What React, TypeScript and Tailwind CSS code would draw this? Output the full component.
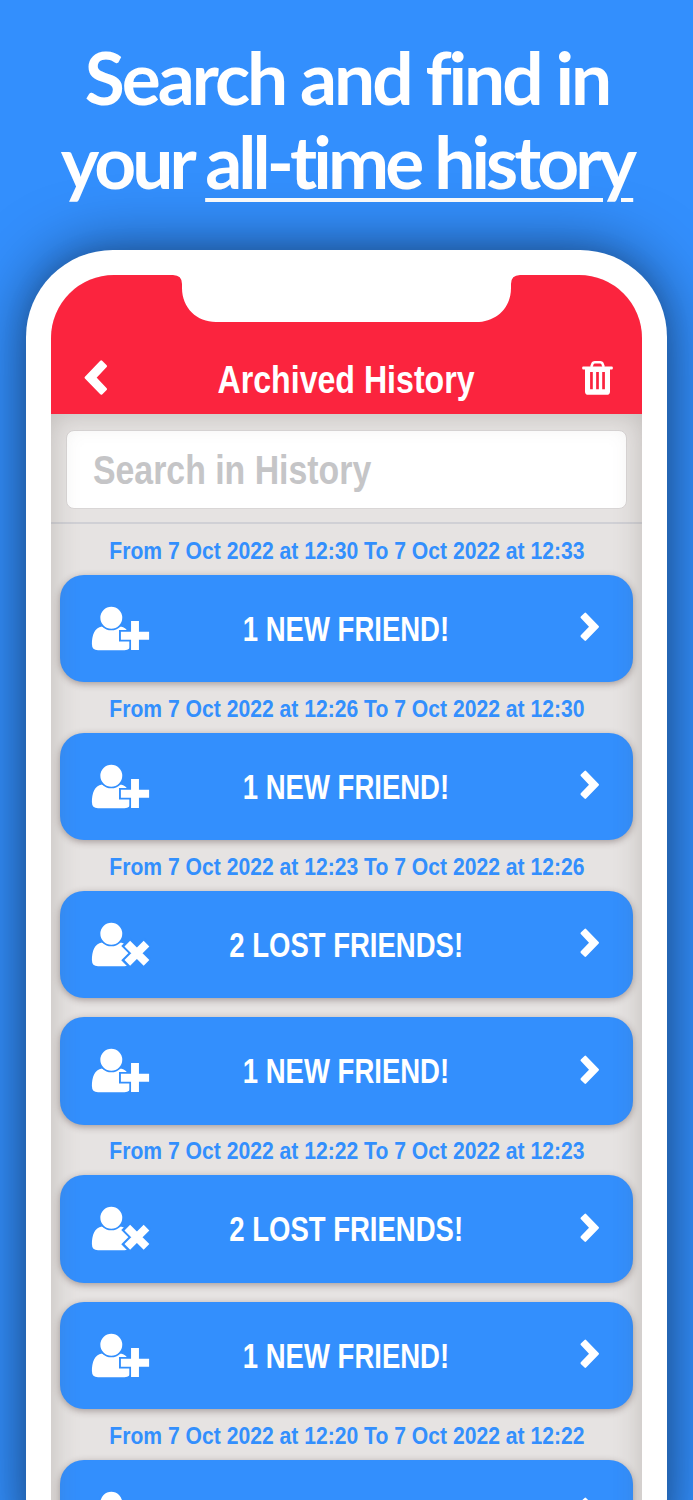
type Kind = "new" | "lost";

interface Item {
  kind: Kind;
  text?: string;
}

interface Group {
  label: string;
  items: Item[];
}

const newFriend: Item = { kind: "new", text: "1 NEW FRIEND!" };
const lostFriends: Item = { kind: "lost", text: "2 LOST FRIENDS!" };

const groups: Group[] = [
  { label: "From 7 Oct 2022 at 12:30 To 7 Oct 2022 at 12:33", items: [newFriend] },
  { label: "From 7 Oct 2022 at 12:26 To 7 Oct 2022 at 12:30", items: [newFriend] },
  { label: "From 7 Oct 2022 at 12:23 To 7 Oct 2022 at 12:26", items: [lostFriends, newFriend] },
  { label: "From 7 Oct 2022 at 12:22 To 7 Oct 2022 at 12:23", items: [lostFriends, newFriend] },
  { label: "From 7 Oct 2022 at 12:20 To 7 Oct 2022 at 12:22", items: [{ kind: "new" }] },
];

function Chevron({ className }: { className: string }) {
  return (
    <svg viewBox="0 0 20 30" className={className} aria-hidden="true">
      <path
        d="M5.3 1.7 L1.6 5.3 L10.5 14.7 L1.6 24.1 L5.3 27.8 L17.9 14.7 Z"
        fill="white"
        stroke="white"
        strokeWidth="2.2"
        strokeLinejoin="round"
      />
    </svg>
  );
}

function TrashIcon() {
  return (
    <svg viewBox="0 0 31 35" className="mb-[3px] h-[35px] w-[31px]" aria-hidden="true">
      <path d="M9.3 7 L10.6 3.4 Q11.2 2.2 12.7 2.2 H18.3 Q19.8 2.2 20.4 3.4 L21.7 7" fill="none" stroke="white" strokeWidth="2.6" />
      <rect x="0.2" y="6.4" width="30.6" height="3" rx="1" fill="white" />
      <path
        fillRule="evenodd"
        fill="white"
        d="M3 7 H28 V31.4 Q28 34.8 24.7 34.8 H6.3 Q3 34.8 3 31.4 Z M8.1 12 V29.2 H10.8 V12 Z M14.15 12 V29.2 H16.85 V12 Z M20.2 12 V29.2 H22.9 V12 Z"
      />
    </svg>
  );
}

function UserIcon({ kind }: { kind: Kind }) {
  return (
    <svg viewBox="0 0 60 46" className="h-[46px] w-[60px] shrink-0" aria-hidden="true">
      <path
        d="M11 20.6 Q15 23.6 20.3 23.6 Q25.6 23.6 29.6 20.6 C37 21.4 39.6 30 39.6 38 Q39.6 44.2 33.6 44.2 H7 Q0.9 44.2 0.9 38 C0.9 30 3.4 21.4 11 20.6 Z"
        fill="white"
      />
      <circle cx="20.3" cy="11.7" r="11.8" fill="white" stroke="#338ffd" strokeWidth="1.7" />
      {kind === "new" ? (
        <g>
          <path d="M44 13 V46 M28 29.8 H60" stroke="#338ffd" strokeWidth="11.4" />
          <path d="M44 14.9 V44.1 M29.9 29.8 H58.1" stroke="white" strokeWidth="7.9" />
        </g>
      ) : (
        <g>
          <path d="M34.5 19.8 L57.3 42.6 M57.3 19.8 L34.5 42.6" stroke="#338ffd" strokeWidth="12" />
          <path d="M36.3 21.6 L55.5 40.8 M55.5 21.6 L36.3 40.8" stroke="white" strokeWidth="8" />
        </g>
      )}
    </svg>
  );
}

function HistoryRow({ kind, text }: Item) {
  return (
    <button className="relative flex h-[107.3px] w-full items-center justify-between rounded-[24px] bg-[#338ffd] pr-[33.5px] pl-[31px] shadow-[0_2px_7px_rgba(60,40,40,0.38)]">
      <UserIcon kind={kind} />
      {text && (
        <span className="-ml-[39px] w-[340px] text-center text-[34.4px] leading-[40px] font-bold whitespace-nowrap text-white">
          <span className="inline-block scale-x-[0.8]">{text}</span>
        </span>
      )}
      <Chevron className="mb-[3px] h-[30px] w-[20px] shrink-0" />
    </button>
  );
}

export default function App() {
  return (
    <main className="flex h-[1500px] w-[693px] flex-col overflow-hidden bg-[#338ffd] font-['Liberation_Sans',Arial,sans-serif]">
      <h1 className="flex h-[249.5px] shrink-0 flex-col items-center pt-[35px] pl-px font-['Lato',sans-serif] text-[73px] leading-[84px] font-bold whitespace-nowrap text-white">
        <span className="tracking-[-3px]">Search and find in</span>
        <span className="tracking-[-3.9px]">
          your{" "}
          <span className="underline decoration-4 underline-offset-[9px]">all-time history</span>
        </span>
      </h1>

      <section className="ml-[26px] h-[1334px] w-[641px] shrink-0 rounded-[87px] bg-white px-[25px] pt-[25.5px] shadow-[0_0_64px_rgba(0,0,0,0.5),0_0_24px_rgba(0,0,0,0.12)]">
        <div className="flex h-full w-[591px] flex-col overflow-hidden rounded-t-[63px] bg-[#e6e3e2]">
          <header className="flex h-[138.5px] shrink-0 flex-col items-center bg-[#fb243e]">
            <svg viewBox="0 0 347 48" className="h-[48px] w-[347px] shrink-0" aria-hidden="true">
              <path d="M0 0 Q9 0.2 9 9 V13 C9 33 24 47 43 47 H303 C323 47 338 33 338 13 V9 Q338 0.2 347 0 V-1 H0 Z" fill="white" />
            </svg>
            <div className="flex h-[68px] w-full items-center justify-between pt-[43px] pr-[29px] pl-[32px]">
              <Chevron className="mb-[3px] h-[36.5px] w-[25px] rotate-180" />
              <h2 className="ml-[2px] w-[360px] text-center text-[39.5px] leading-[44px] font-bold whitespace-nowrap text-white">
                <span className="inline-block scale-x-[0.813]">Archived History</span>
              </h2>
              <TrashIcon />
            </div>
          </header>

          <div className="relative flex grow flex-col">
            <div className="h-[110.8px] shrink-0 border-b-2 border-[#d0d0d5] px-[15px] pt-[16px]">
              <div className="flex h-[79px] items-center rounded-[8px] border border-[#d9d6d6] bg-white pt-[2px] pl-[25.5px] text-[41px] leading-[46px] font-bold whitespace-nowrap text-[#c5c5c7]">
                <span className="origin-left scale-x-[0.825]">Search in History</span>
              </div>
            </div>

            <div className="flex flex-col px-[9px]">
              {groups.map((group) => (
                <section key={group.label} className="flex flex-col">
                  <h3 className="flex h-[50.7px] items-center justify-center pt-[2px] text-[24.8px] leading-[30px] font-bold whitespace-nowrap text-[#338ffd]">
                    <span className="scale-x-[0.852]">{group.label}</span>
                  </h3>
                  <div className="flex flex-col gap-[19.2px]">
                    {group.items.map((item, i) => (
                      <HistoryRow key={i} kind={item.kind} text={item.text} />
                    ))}
                  </div>
                </section>
              ))}
            </div>

            <div className="pointer-events-none absolute inset-0 shadow-[inset_0_0_28px_rgba(90,80,75,0.27)]" />
          </div>
        </div>
      </section>
    </main>
  );
}
